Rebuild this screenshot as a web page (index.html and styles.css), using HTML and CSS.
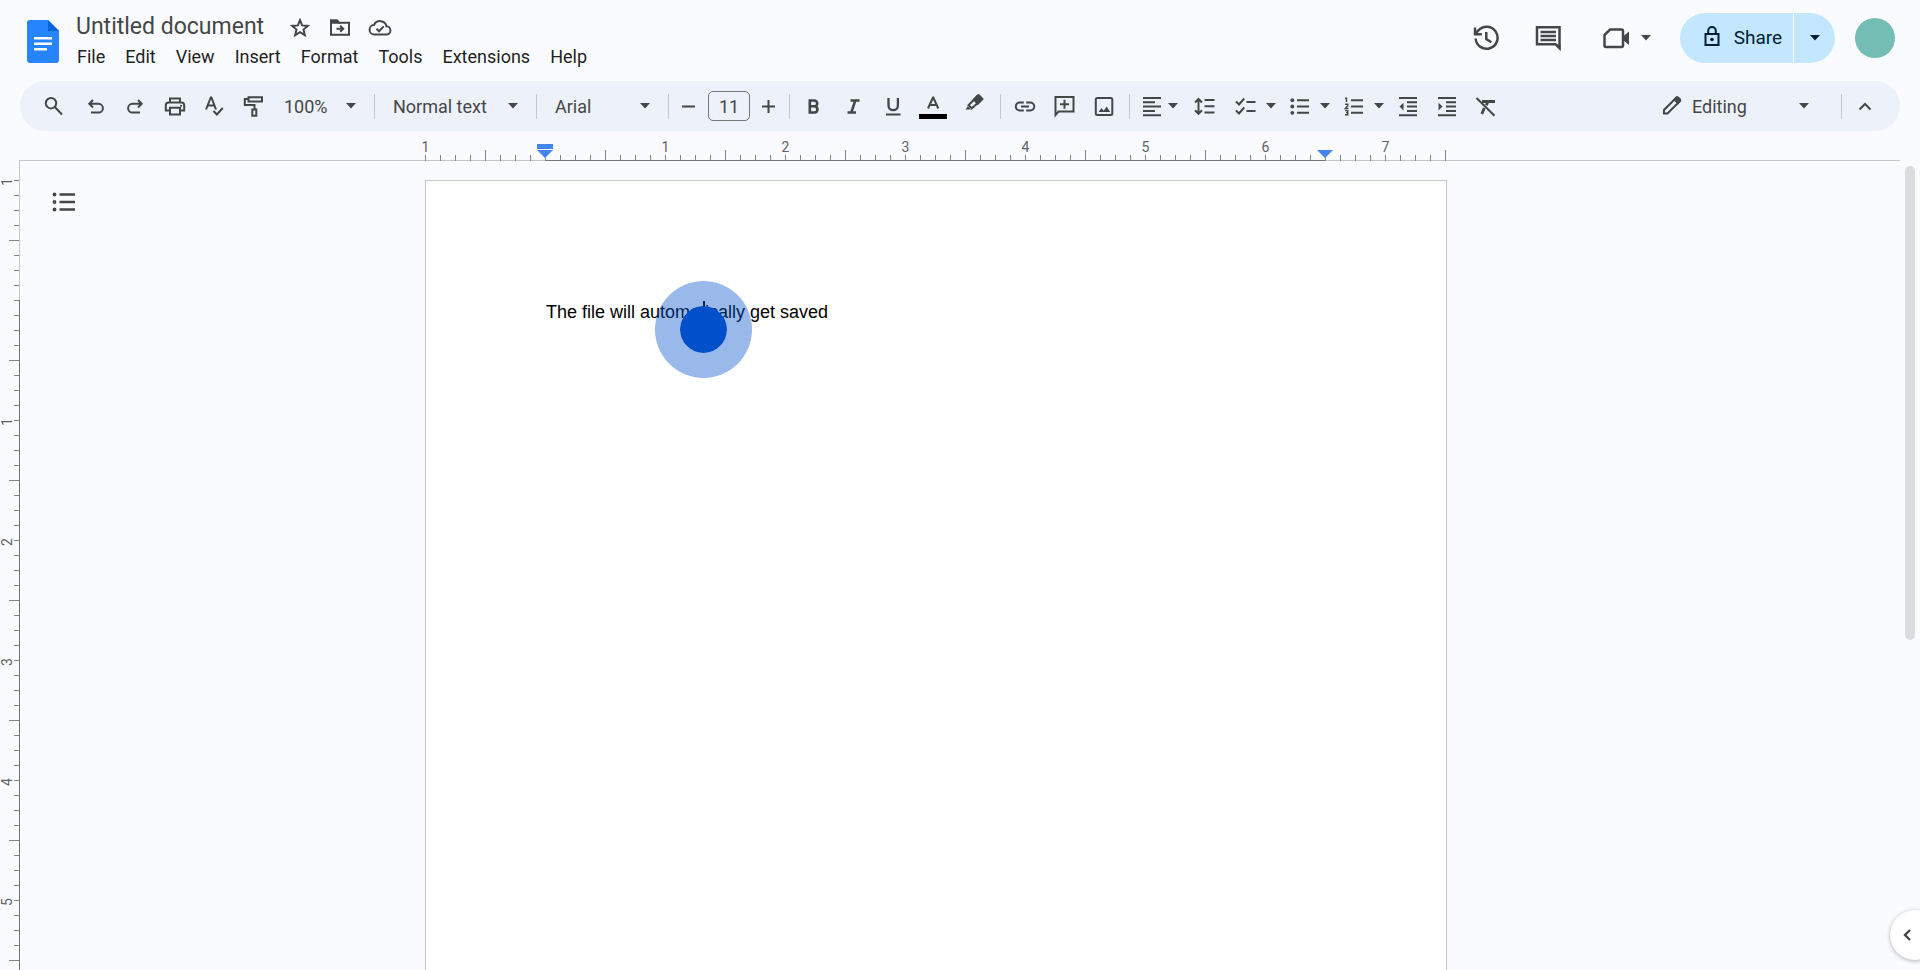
FILE: index.html
```html
<!DOCTYPE html>
<html lang="en">
<head>
<meta charset="utf-8">
<title>Untitled document</title>
<link rel="stylesheet" href="styles.css">
</head>
<body>
<svg class="defs" aria-hidden="true">
  <symbol id="caret" viewBox="0 0 10 6"><path d="M0 0h10L5 5.5z" fill="currentColor"/></symbol>
</svg>

<header class="header">
  <a class="logo" href="#" aria-label="Docs home">
    <svg width="32" height="43" viewBox="0 0 32 43"><path d="M3 0h18l11 11v29a3 3 0 0 1-3 3H3a3 3 0 0 1-3-3V3a3 3 0 0 1 3-3z" fill="#2684fc"/><path d="M21 0l11 11H21z" fill="#0066da"/><path d="M7 17h18v2.600H7zM7 22.500h18v2.600H7zM7 28h13v2.600H7z" fill="#fff"/></svg>
  </a>
  <div class="heading">
    <div class="title-row">
      <h1 class="title">Untitled document</h1>
      <button class="title-button" aria-label="Star"><svg class="icon" viewBox="0 0 24 24"><path d="M12 4.200l2.100 5.200 5.700.5-4.300 3.700 1.300 5.500-4.800-2.900-4.800 2.900 1.300-5.500-4.300-3.700 5.700-.5z"/></svg></button>
      <button class="title-button" aria-label="Move"><svg class="icon" viewBox="0 0 24 24"><path d="M3 4.500h6l2 2.200h10v12H3z"/><path d="M3 4.500h6l2 2.200H3z" fill="currentColor"/><path d="M8.500 12.700h6.500M12.200 9.700l3 3-3 3"/></svg></button>
      <button class="title-button" aria-label="Document status"><svg class="icon" viewBox="0 0 24 24"><path d="M6.500 18.500h11.700a4.100 4.100 0 0 0 .3-8.200A6.600 6.600 0 0 0 6 9.100a4.700 4.700 0 0 0 .5 9.400z"/><path d="M8.500 12.700l2.600 2.600 4.600-4.900"/></svg></button>
    </div>
    <nav class="menus">
      <button>File</button><button>Edit</button><button>View</button><button>Insert</button><button>Format</button><button>Tools</button><button>Extensions</button><button>Help</button>
    </nav>
  </div>
  <div class="actions">
    <button class="action" aria-label="Version history"><svg class="icon large" viewBox="0 0 28 28"><path d="M3.600 14.500a11 11 0 1 0 3-8.300L3.500 9.500M3 3.500v6.800h6.800M14.300 8v7l5 3.200"/></svg></button>
    <button class="action" aria-label="Comments"><svg class="icon large" viewBox="0 0 28 28"><path d="M3 3.200h22.500v21l-4-4H3z"/><path d="M21 20.500h5.500v5z" fill="currentColor" stroke="none"/><path d="M6.500 8h15.500M6.500 12h15.500M6.500 16h15.500"/></svg></button>
    <button class="action meet" aria-label="Join a call"><svg class="icon large" viewBox="0 0 28 28"><path d="M8 5.500h11.500a1.500 1.500 0 0 1 1.500 1.500v14.500a1.500 1.500 0 0 1-1.500 1.500H4a1.500 1.500 0 0 1-1.500-1.500V11z"/><path d="M21 12.500l6-5v13.500l-6-5z" fill="currentColor" stroke="none"/></svg><svg class="caret"><use href="#caret"/></svg></button>
    <div class="share">
      <button class="share-main"><svg class="icon" viewBox="0 0 24 24"><path d="M5.500 9h13v11h-13zM8.200 9V5.800a3.800 3.800 0 0 1 7.600 0V9"/><circle cx="12" cy="14.500" r="1.800" fill="currentColor" stroke="none"/></svg>Share</button>
      <button class="share-more" aria-label="Quick sharing actions"><svg class="caret"><use href="#caret"/></svg></button>
    </div>
    <button class="avatar" aria-label="Account"></button>
  </div>
</header>

<div class="toolbar" role="toolbar">
  <div class="group">
    <button aria-label="Search the menus"><svg class="icon" viewBox="0 0 24 24"><circle cx="9" cy="9.200" r="5.200"/><path d="M12.800 13l7.200 7.500"/></svg></button>
    <button aria-label="Undo"><svg class="icon" viewBox="0 0 24 24"><path d="M11 6L7.300 9.800l3.700 3.700M7.500 9.800h9a4.400 4.400 0 0 1 0 8.800H9"/></svg></button>
    <button aria-label="Redo"><svg class="icon" viewBox="0 0 24 24"><path d="M16 6l3.700 3.800-3.700 3.700M19.500 9.800h-9a4.400 4.400 0 0 0 0 8.800H18"/></svg></button>
    <button aria-label="Print"><svg class="icon" viewBox="0 0 24 24"><path d="M8 8.500V4.500h10v4M7.500 16.500H3.800v-5.200a2.800 2.800 0 0 1 2.800-2.800h12.800a2.800 2.800 0 0 1 2.800 2.800v5.200H18.500M8 13.800h10v6.700H8z"/><circle cx="19" cy="11.700" r="1" fill="currentColor" stroke="none"/></svg></button>
    <button aria-label="Spelling and grammar check"><svg class="icon" viewBox="0 0 24 24"><path d="M4 15.500L8.800 3.500h.6l4.600 12M5.600 11.500h7M11.500 17l3.300 3.500 6-6.500"/></svg></button>
    <button aria-label="Paint format"><svg class="icon" viewBox="0 0 24 24"><path d="M6.500 3.200H20v4.300H6.500zM6.500 5H2.800v6h9.700v4.500M10.300 15.500h4v6.300h-4z"/></svg></button>
  </div>
  <div class="drop zoom"><select aria-label="Zoom"><option>100%</option></select><svg class="caret"><use href="#caret"/></svg></div>
  <span class="divider"></span>
  <div class="drop style"><select aria-label="Styles"><option>Normal text</option></select><svg class="caret"><use href="#caret"/></svg></div>
  <span class="divider"></span>
  <div class="drop font"><select aria-label="Font"><option>Arial</option></select><svg class="caret"><use href="#caret"/></svg></div>
  <span class="divider"></span>
  <div class="size">
    <button aria-label="Decrease font size"><svg class="icon" viewBox="0 0 24 24"><path d="M5 12.500h13"/></svg></button>
    <input type="text" value="11" aria-label="Font size">
    <button aria-label="Increase font size"><svg class="icon" viewBox="0 0 24 24"><path d="M5 12.500h13M11.500 6v13"/></svg></button>
  </div>
  <span class="divider"></span>
  <div class="group">
    <button aria-label="Bold"><svg class="icon" viewBox="0 0 24 24"><path d="M7.800 6.500h4.500a2.900 2.900 0 0 1 0 5.800H7.800zM7.800 12.300h5.200a3.200 3.200 0 0 1 0 6.200H7.800z" stroke-width="2.600"/></svg></button>
    <button aria-label="Italic"><svg class="icon" viewBox="0 0 24 24"><path d="M8.500 6.500h9M5.500 18.500h8.500M13.300 6.500l-4 12" stroke-width="2.500"/></svg></button>
    <button aria-label="Underline"><svg class="icon" viewBox="0 0 24 24"><path d="M6.500 4v7.500a4.700 4.700 0 0 0 9.400 0V4" stroke-width="2.300"/><path d="M4 20.500h14.500"/></svg></button>
    <button aria-label="Text color"><svg class="text-color" width="28" height="24" viewBox="0 0 28 24"><path d="M8 14.500L13 3.500h.3l5 11M9.700 11h7" fill="none" stroke="currentColor" stroke-width="2"/><path d="M-1 20h28v5H-1z" fill="#000"/></svg></button>
    <button class="highlight" aria-label="Highlight color"><svg class="icon" viewBox="0 0 24 24"><path d="M2.500 15.500h5.500l-3.200-3.200z" fill="currentColor" stroke="none"/><path d="M5.500 11.300L14 2.500l3.800 3.800-9 8z"/><path d="M11 5.500L15.500 1l4 4-5 5z" fill="currentColor" stroke-linejoin="round"/></svg></button>
  </div>
  <span class="divider"></span>
  <div class="group">
    <button aria-label="Insert link"><svg class="icon" viewBox="0 0 24 24"><path d="M10.800 8.500H6.800a4 4 0 0 0 0 8h4M13.200 8.500h4a4 4 0 0 1 0 8h-4M8 12.500h8"/></svg></button>
    <button aria-label="Add comment"><svg class="icon" viewBox="0 0 24 24"><path d="M2.500 3h18v14.500h-15l-3 3.500zM11.500 5.800v9M7 10.300h9"/></svg></button>
    <button aria-label="Insert image"><svg class="icon" viewBox="0 0 24 24"><rect x="2.800" y="4" width="16.500" height="17" rx="1.500"/><path d="M5.500 18l3-4 2.200 2.700 3-4.200 3.500 5.500z" fill="currentColor" stroke="none"/></svg></button>
  </div>
  <span class="divider"></span>
  <div class="group">
    <button class="with-caret" aria-label="Align"><svg class="icon" viewBox="0 0 24 24"><path d="M3 4h18M3 8.300h12M3 12.600h18M3 16.900h12M3 21.200h18"/></svg><svg class="caret"><use href="#caret"/></svg></button>
    <button class="wide" aria-label="Line spacing"><svg class="icon" viewBox="0 0 24 24"><path d="M10.500 6H20.500M10.500 12.300H20.500M10.500 18.600H20.500M4.500 5.500v14M1 8.500l3.500-3.500L8 8.500M1 16.300l3.500 3.500L8 16.300"/></svg></button>
    <button class="with-caret list" aria-label="Checklist"><svg class="icon" viewBox="0 0 24 24"><path d="M12.500 8H21.500M12.500 17H21.500M2 7.500l3 3 5.200-6M2 16.500l3 3 5.200-6"/></svg><svg class="caret"><use href="#caret"/></svg></button>
    <button class="with-caret list" aria-label="Bulleted list"><svg class="icon" viewBox="0 0 24 24"><path d="M9 6.200h12M9 12.500h12M9 18.800h12"/><g fill="currentColor" stroke="none"><circle cx="4.300" cy="6.200" r="1.900"/><circle cx="4.300" cy="12.500" r="1.900"/><circle cx="4.300" cy="18.800" r="1.900"/></g></svg><svg class="caret"><use href="#caret"/></svg></button>
    <button class="with-caret list" aria-label="Numbered list"><svg class="icon" viewBox="0 0 24 24"><path d="M9 6.200h12M9 12.500h12M9 18.800h12"/><path d="M3 4.200h1.500V8M3 10.300h2.800v1.400L3.300 14.500h3M3 16.600h2.800v2H4M5.800 18.600v2.200H3" stroke-width="1.400"/></svg><svg class="caret"><use href="#caret"/></svg></button>
    <button class="narrow" aria-label="Decrease indent"><svg class="icon" viewBox="0 0 24 24"><path d="M2 4h18M10 8.300h10M10 12.600h10M10 16.900h10M2 21.200h18"/><path d="M6.500 8.800v7.600l-4-3.800z" fill="currentColor" stroke="none"/></svg></button>
    <button class="narrow" aria-label="Increase indent"><svg class="icon" viewBox="0 0 24 24"><path d="M3 4h18M11 8.300h10M11 12.600h10M11 16.900h10M3 21.200h18"/><path d="M3.500 8.800v7.600l4-3.800z" fill="currentColor" stroke="none"/></svg></button>
    <button class="narrow" aria-label="Clear formatting"><svg class="icon" viewBox="0 0 24 24"><path d="M3.500 4L21.500 21.800"/><path d="M9 7.500h13M14.700 8l-1.300 3.200M11.300 14l-2.500 6" stroke-width="2.800"/></svg></button>
  </div>
  <div class="mode">
    <svg class="icon" viewBox="0 0 24 24"><path d="M4 19.500v-3.500L16.200 3.800a1.500 1.500 0 0 1 2.200 0l1.300 1.300a1.500 1.500 0 0 1 0 2.200L7.500 19.500z"/><path d="M14.500 5.500l3.500 3.500 2-2.200L16.800 3.500z" fill="currentColor"/></svg>
    <div class="drop editing"><select aria-label="Editing mode"><option>Editing</option></select><svg class="caret"><use href="#caret"/></svg></div>
    <span class="divider"></span>
    <button aria-label="Hide the menus"><svg class="icon" viewBox="0 0 24 24"><path d="M6.500 15.500L12 10l5.500 5.500"/></svg></button>
  </div>
</div>

<div class="ruler-bar">
  <div class="ruler">
    <ol class="marks"><li>1</li><li></li><li>1</li><li>2</li><li>3</li><li>4</li><li>5</li><li>6</li><li>7</li></ol>
    <svg class="marker marker-left" width="16" height="14" viewBox="0 0 16 14"><path d="M0 0h16v5H0zM0 6h16L8 14z" fill="#4285f4"/></svg>
    <svg class="marker marker-right" width="16" height="14" viewBox="0 0 16 14"><path d="M0 6h16L8 14z" fill="#4285f4"/></svg>
  </div>
</div>

<main class="workspace">
  <div class="side-ruler">
    <ol class="side-marks"><li>1</li><li></li><li>1</li><li>2</li><li>3</li><li>4</li><li>5</li></ol>
  </div>
  <div class="canvas">
    <button class="outline" aria-label="Show outline"><svg class="icon large" viewBox="0 0 28 28"><path d="M9.500 6.500H25M9.500 14H25M9.500 21.500H25" stroke-width="2.600"/><g fill="currentColor" stroke="none"><circle cx="4.500" cy="6.500" r="1.900"/><circle cx="4.500" cy="14" r="1.900"/><circle cx="4.500" cy="21.500" r="1.900"/></g></svg></button>
    <article class="page">
      <p>The file will automatically get saved</p>
      <span class="text-cursor"></span>
      <span class="pointer"></span>
    </article>
  </div>
  <div class="scroll-track"><div class="scroll-thumb"></div></div>
</main>
<button class="side-toggle" aria-label="Show side panel"><svg class="icon" viewBox="0 0 24 24"><path d="M14 7l-5 5 5 5" stroke-width="2.400"/></svg></button>
</body>
</html>
```

FILE: styles.css
```css
* { box-sizing: border-box; }

body {
  margin: 0;
  height: 100vh;
  display: flex;
  flex-direction: column;
  overflow: hidden;
  background: #fafbfe;
  color: #444746;
  font-family: Roboto, "Liberation Sans", sans-serif;
  font-size: 18px;
}

button {
  display: flex;
  align-items: center;
  justify-content: center;
  flex: none;
  padding: 0;
  border: 0;
  background: none;
  color: inherit;
  font: inherit;
}

.defs { position: absolute; width: 0; height: 0; }

.icon {
  flex: none;
  width: 24px;
  height: 24px;
  fill: none;
  stroke: currentColor;
  stroke-width: 2;
}
.icon.large { width: 28px; height: 28px; stroke-width: 2.500; }
.caret { flex: none; width: 10px; height: 6px; }

/* Header */
.header { display: flex; flex: none; height: 81px; padding-left: 27px; }
.logo { padding-top: 20px; }
.logo svg { display: block; }
.heading { margin-left: 17px; padding-top: 12px; }
.title-row { display: flex; align-items: center; gap: 16px; height: 30px; }
.title { margin: 0 8px 0 0; font-size: 23px; font-weight: 400; line-height: 30px; }
.title-button { margin-top: 2px; }
.menus { display: flex; gap: 20px; height: 28px; padding-left: 1px; color: #1f1f1f; }
.actions { display: flex; align-items: center; height: 76px; margin-left: auto; padding-right: 25px; }
.action { margin-right: 34px; }
.meet { gap: 11px; margin: 0 29px 0 6px; }
.share { display: flex; gap: 1px; height: 50px; margin-right: 20px; color: #001d35; }
.share button { background: #c2e7ff; }
.share-main { gap: 10px; width: 113px; padding-left: 9px; border-radius: 25px 0 0 25px; }
.share .share-main { padding-bottom: 2px; font-size: 19px; }
.share-more { width: 41px; border-radius: 0 25px 25px 0; }
.avatar { width: 40px; height: 40px; border-radius: 50%; background: #74bdb5; }

/* Toolbar */
.toolbar {
  display: flex;
  flex: none;
  align-items: center;
  height: 50px;
  margin: 0 20px;
  padding: 0 20px;
  border-radius: 25px;
  background: #edf1fa;
}
.group { display: flex; gap: 12px; }
.group button { width: 28px; height: 32px; }
.group .highlight { width: 30px; }
.group .narrow { width: 26px; }
.group .wide { width: 32px; }
.group .with-caret { width: auto; gap: 4px; }
.group .list { gap: 8px; }
.text-color { overflow: visible; }
.divider { flex: none; width: 1px; height: 25px; margin: 0 10px; background: #c4c7cc; }
.drop { display: flex; position: relative; flex: none; }
.drop select {
  appearance: none;
  width: 100%;
  height: 32px;
  padding: 0 24px 0 8px;
  border: 0;
  background: none;
  color: inherit;
  font: inherit;
}
.drop .caret { position: absolute; top: 13px; right: 8px; pointer-events: none; }
.zoom { width: 88px; margin-left: 8px; }
.style { width: 141px; }
.font { width: 111px; }
.editing { width: 133px; }
.size { display: flex; align-items: center; gap: 10px; padding: 0 1px; }
.size button { width: 18px; height: 32px; }
.size input {
  width: 42px;
  height: 30px;
  padding: 0;
  border: 1px solid #747775;
  border-radius: 5px;
  background: none;
  color: inherit;
  font: inherit;
  text-align: center;
}
.mode { display: flex; align-items: center; margin-left: auto; }
.mode button { width: 30px; height: 32px; }
.mode .divider { margin: 0 8px 0 24px; }

/* Rulers */
.ruler-bar {
  display: flex;
  flex: none;
  justify-content: center;
  height: 30px;
  margin: 0 20px 0 19px;
  padding-right: 48px;
  border-bottom: 1px solid #c4c7c5;
}
.ruler {
  position: relative;
  flex: none;
  width: 1022px;
  height: 30px;
  background:
    linear-gradient(#757575, #757575) 120px 100% / 780px 1px no-repeat,
    linear-gradient(90deg, #80868b 1px, transparent 1px) 0 100% / 15px 6px repeat-x,
    linear-gradient(90deg, #80868b 1px, transparent 1px) 60px 100% / 120px 11px repeat-x;
}
.marks, .side-marks { display: flex; margin: 0; padding: 0; list-style: none; font-size: 14px; color: #5f6368; }
.marks { width: 1080px; margin-left: -59px; padding-top: 8px; line-height: 16px; }
.marks li { flex: 1; text-align: center; }
.marker { position: absolute; bottom: 3px; }
.marker-left { left: 112px; }
.marker-right { left: 892px; }

.workspace { display: flex; flex: 1; min-height: 0; }
.side-ruler {
  flex: none;
  width: 20px;
  padding-top: 19px;
  overflow: hidden;
  background:
    linear-gradient(#c4c7c5 139px, #757575 139px) 100% 0 / 1px 100% no-repeat;
}
.side-marks {
  flex-direction: column;
  width: 19px;
  background:
    linear-gradient(#80868b 1px, transparent 1px) 100% 0 / 5px 15px repeat-y,
    linear-gradient(#80868b 1px, transparent 1px) 100% 60px / 10px 120px repeat-y;
  line-height: 15px;
}
.side-marks li {
  position: relative;
  top: -58px;
  height: 120px;
  padding-left: 4px;
  writing-mode: vertical-rl;
  transform: rotate(180deg);
  text-align: center;
}

/* Document */
.canvas { display: flex; position: relative; flex: 1; justify-content: center; padding: 19px 28px 0 0; }
.outline { position: absolute; top: 27px; left: 30px; }
.page {
  position: relative;
  flex: none;
  width: 1022px;
  padding: 119px 120px 0;
  border: 1px solid #c4c7c5;
  border-bottom: 0;
  background: #fff;
  color: #000;
  font-family: "Liberation Sans", Arial, sans-serif;
  font-size: 18px;
  line-height: 24px;
}
.page p { margin: 0; }
.text-cursor { position: absolute; top: 120px; left: 277px; width: 2px; height: 20px; background: #000; }
.pointer {
  position: absolute;
  top: 100px;
  left: 229px;
  width: 97px;
  height: 97px;
  border: 25px solid rgba(0, 80, 203, 0.4);
  border-radius: 50%;
  background: #0050cb;
  background-clip: padding-box;
}
.scroll-track { flex: none; width: 40px; padding: 5px 5px 0 25px; }
.scroll-thumb { height: 474px; border-radius: 5px; background: #dadce0; }
.side-toggle {
  position: absolute;
  right: -20px;
  bottom: 10px;
  width: 50px;
  height: 50px;
  padding-right: 14px;
  border-radius: 50%;
  background: #fff;
  box-shadow: 0 1px 4px rgba(60, 64, 67, 0.4);
}
```
